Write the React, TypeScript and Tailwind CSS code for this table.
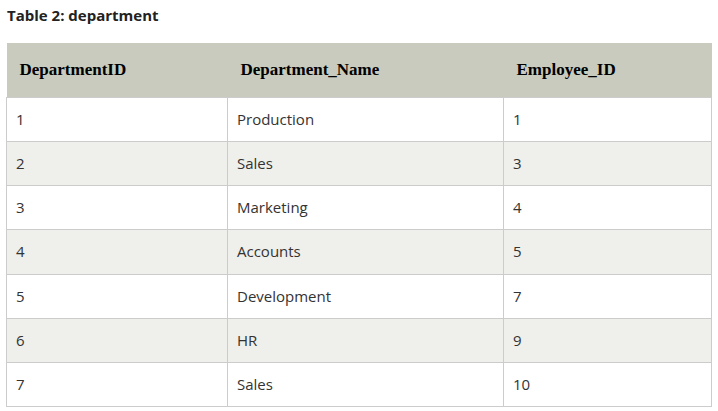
const rows = [
  ['1', 'Production', '1'],
  ['2', 'Sales', '3'],
  ['3', 'Marketing', '4'],
  ['4', 'Accounts', '5'],
  ['5', 'Development', '7'],
  ['6', 'HR', '9'],
  ['7', 'Sales', '10'],
];

export default function App() {
  return (
    <div className="w-[718px] h-[411px] bg-white overflow-hidden pt-[5px] pl-[7px] pr-[7px]">
      <p className="text-[15px] font-bold text-[#222] leading-[20px] font-['Open_Sans',sans-serif]">
        Table 2: department
      </p>
      <table className="mt-[18px] -ml-px w-[705px] border-collapse table-fixed">
        <colgroup>
          <col className="w-[221px]" />
          <col className="w-[276px]" />
          <col className="w-[208px]" />
        </colgroup>
        <thead>
          <tr className="bg-[#c8cbbe] h-[54px]">
            {['DepartmentID', 'Department_Name', 'Employee_ID'].map((h) => (
              <th
                key={h}
                className="text-left align-middle pl-[13px] text-[17px] font-bold text-black font-['Liberation_Serif',serif]"
              >
                {h}
              </th>
            ))}
          </tr>
        </thead>
        <tbody>
          {rows.map((r, i) => (
            <tr key={i} className={`${i === 3 ? 'h-[45px]' : 'h-[44px]'} ${i % 2 === 1 ? 'bg-[#efefeb]' : 'bg-white'}`}>
              {r.map((c, j) => (
                <td
                  key={j}
                  className="border border-[#cccccc] pl-[9px] align-middle text-[15px] text-[#333] font-['Open_Sans',sans-serif]"
                >
                  {c}
                </td>
              ))}
            </tr>
          ))}
        </tbody>
      </table>
    </div>
  );
}
